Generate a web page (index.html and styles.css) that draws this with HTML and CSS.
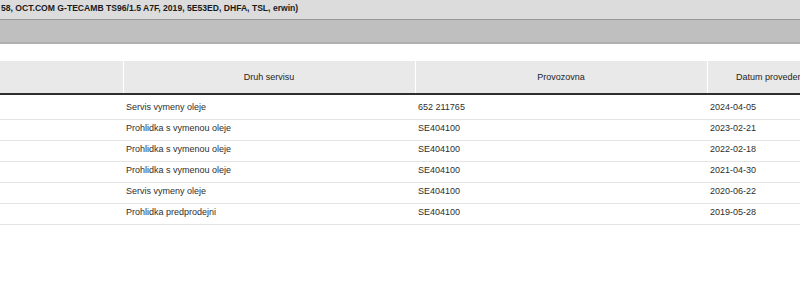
FILE: index.html
```html
<!DOCTYPE html>
<html lang="cs">
<head>
<meta charset="utf-8">
<title>Servisni historie</title>
<link rel="stylesheet" href="styles.css">
</head>
<body>
<div class="titlebar">58, OCT.COM G-TECAMB TS96/1.5 A7F, 2019, 5E53ED, DHFA, TSL, erwin)</div>
<div class="toolbar"></div>
<div class="content">
  <table class="grid">
    <colgroup>
      <col class="c1"><col class="c2"><col class="c3"><col class="c4">
    </colgroup>
    <thead>
      <tr><th></th><th>Druh servisu</th><th>Provozovna</th><th>Datum provedeni</th></tr>
    </thead>
    <tbody>
      <tr class="first"><td></td><td>Servis vymeny oleje</td><td>652 211765</td><td>2024-04-05</td></tr>
      <tr><td></td><td>Prohlidka s vymenou oleje</td><td>SE404100</td><td>2023-02-21</td></tr>
      <tr><td></td><td>Prohlidka s vymenou oleje</td><td>SE404100</td><td>2022-02-18</td></tr>
      <tr><td></td><td>Prohlidka s vymenou oleje</td><td>SE404100</td><td>2021-04-30</td></tr>
      <tr><td></td><td>Servis vymeny oleje</td><td>SE404100</td><td>2020-06-22</td></tr>
      <tr><td></td><td>Prohlidka predprodejni</td><td>SE404100</td><td>2019-05-28</td></tr>
    </tbody>
  </table>
</div>
</body>
</html>
```
FILE: styles.css
```css
html, body {
  margin: 0;
  padding: 0;
  background: #fff;
  overflow: hidden;
}
body {
  font-family: "Liberation Sans", Arial, sans-serif;
  font-size: 9px;
  color: #333;
}
.titlebar {
  height: 20px;
  box-sizing: border-box;
  background: #dcdcdc;
  border-bottom: 1px solid #979797;
  font-size: 8.6px;
  font-weight: bold;
  color: #1a1a1a;
  line-height: 17px;
  padding-left: 1px;
  white-space: nowrap;
}
.toolbar {
  height: 24px;
  box-sizing: border-box;
  background: #bfbfbf;
  border-bottom: 2px solid #b0b0b0;
}
.content {
  padding-top: 17px;
  width: 800px;
  overflow: hidden;
}
.grid {
  border-collapse: collapse;
  table-layout: fixed;
  width: 833px;
}
.c1 { width: 123px; }
.c2 { width: 292px; }
.c3 { width: 292px; }
.c4 { width: 126px; }
.grid th {
  background: #e9e9e9;
  font-weight: normal;
  color: #1e1e1e;
  height: 33px;
  box-sizing: border-box;
  padding: 0 3px;
  text-align: center;
  border-left: 1px solid #fff;
  border-bottom: 2px solid #2e2e2e;
  white-space: nowrap;
}
.grid th:first-child { border-left: none; }
.grid td {
  padding: 1px 3px 5px;
  line-height: 14px;
  border-bottom: 1px solid #e4e4e4;
  white-space: nowrap;
  color: #2e2e2e;
}
.grid tr.first td {
  padding-top: 5px;
  padding-bottom: 5px;
}
```
